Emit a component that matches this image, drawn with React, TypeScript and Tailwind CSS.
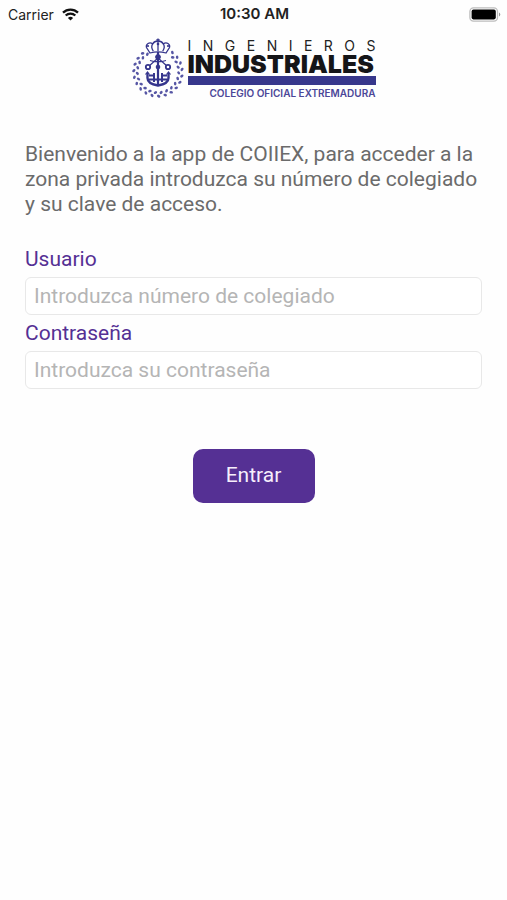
import React from "react";

function WifiIcon() {
  return (
    <svg viewBox="0 0 17 13" className="h-[13px] w-[17px]" fill="none" stroke="#111" strokeWidth="2.3" aria-hidden="true">
      <path d="M1 4.6a10.8 10.8 0 0 1 15 0" />
      <path d="M3.7 7.5a6.9 6.9 0 0 1 9.6 0" />
      <path d="M8.5 12.6 5.9 9.9a3.8 3.8 0 0 1 5.2 0Z" fill="#111" stroke="none" />
    </svg>
  );
}

function BatteryIcon() {
  return (
    <svg viewBox="0 0 32 15" className="h-[15px] w-8" aria-hidden="true">
      <rect x="0.9" y="0.9" width="27.6" height="13.2" rx="3.6" fill="#fff" stroke="#bdbdbd" strokeWidth="1.3" />
      <rect x="2.6" y="2.6" width="24.2" height="9.8" rx="1.8" fill="#000" />
      <path d="M30 5.5a2.2 2.2 0 0 1 0 4Z" fill="#999" />
    </svg>
  );
}

function Crest() {
  const leaves = Array.from({ length: 19 }, (_, i) => 38 + (i * 284) / 18);
  return (
    <svg viewBox="0 0 52 60" className="h-[60px] w-[52px] shrink-0" fill="none" stroke="#35358c" aria-hidden="true">
      <g stroke="none" fill="#5656a4">
        {leaves.map((a) => (
          <g key={a} transform={`rotate(${a} 26 34) translate(26 11)`}>
            <ellipse cx="-1.2" cy="-0.6" rx="1.8" ry="1.3" transform="rotate(35)" />
            <ellipse cx="1" cy="3.4" rx="1.8" ry="1.3" transform="rotate(-30)" />
          </g>
        ))}
      </g>
      <g strokeWidth="1.3">
        <path d="M18 15 14.5 9.5c-1-3.5 3-6 6.2-3.6C22 3.4 24 3 26 3s4 .4 5.3 2.9c3.2-2.4 7.2.1 6.2 3.6L34 15c-5-1.5-11-1.5-16 0Z" />
        <path d="M20.7 5.9c-1.6 2.2-.9 5 .6 7.3M31.3 5.9c1.6 2.2.9 5-.6 7.3M26 .5v12.5M24.3 1.8h3.4" />
      </g>
      <g fill="#35358c" stroke="none">
        <circle cx="16" cy="8" r="1.1" />
        <circle cx="36" cy="8" r="1.1" />
        <circle cx="26" cy="6" r="1.3" />
      </g>
      <path d="M26 14v33" strokeWidth="2.2" />
      <path d="M26 20 16.5 28.5M26 20l9.5 8.5M18 22.500c5 1.500 11 1.500 16 0" strokeWidth="1.2" />
      <circle cx="26" cy="19" r="2.4" fill="#35358c" />
      <circle cx="16" cy="29" r="2.2" fill="#fff" strokeWidth="1.8" />
      <circle cx="36" cy="29" r="2.2" fill="#fff" strokeWidth="1.8" />
      <circle cx="26" cy="29" r="2.3" fill="#35358c" stroke="none" />
      <path d="M15.5 35v5c0 5 4.5 6.5 10.5 7.5 6-1 10.5-2.5 10.5-7.5v-5" strokeWidth="2.4" />
      <path d="M13.5 36.5l2-2.500 2 2.500M34.500 36.500l2-2.500 2 2.500" strokeWidth="1.2" />
      <path d="M17 37.5h5.5M17 41.5h18M30 37.5h5M22 35v9M30 35v9" strokeWidth="2" />
    </svg>
  );
}

function Logo() {
  return (
    <div className="mx-auto flex w-[244px] items-start gap-1">
      <Crest />
      <div className="flex-1 whitespace-nowrap">
        <p className="text-[14px] leading-4 text-[#222] [text-align-last:justify]">I N G E N I E R O S</p>
        <p className="text-[25px] leading-5 font-black text-[#151518]">INDUSTRIALES</p>
        <div className="mt-0.5 h-[9px] bg-[#37378c]" />
        <p className="mt-0.5 text-right text-[10px] leading-3 font-semibold text-[#4b4798]">COLEGIO OFICIAL EXTREMADURA</p>
      </div>
    </div>
  );
}

function Field({ id, label, type, placeholder }: { id: string; label: string; type: string; placeholder: string }) {
  return (
    <div>
      <label htmlFor={id} className="block h-9 text-[21px] leading-9 text-[#553094]">
        {label}
      </label>
      <input
        id={id}
        type={type}
        placeholder={placeholder}
        className="block h-[38px] w-full rounded-md border border-[#e8e8e8] bg-white px-2 text-[21px] text-[#666] outline-none placeholder:text-[#b5b5b5] focus:border-[#553094]"
      />
    </div>
  );
}

export default function App() {
  return (
    <main className="min-h-screen bg-[#fefefe] font-['Inter',sans-serif]">
      <header className="grid h-7 grid-cols-3 items-center pr-1.5 pl-2 text-[14px] text-[#222]">
        <div className="flex items-center gap-2">
          <span>Carrier</span>
          <WifiIcon />
        </div>
        <span className="text-center text-[15px] font-semibold whitespace-nowrap">10:30 AM</span>
        <div className="flex justify-end">
          <BatteryIcon />
        </div>
      </header>
      <div className="mt-[10px]">
        <Logo />
      </div>
      <form className="px-[25px] font-['Roboto',sans-serif]" onSubmit={(e) => e.preventDefault()}>
        <p className="mt-[43px] text-[21px] leading-[25px] text-[#6b6b6b]">
          Bienvenido a la app de COIIEX, para acceder a la zona privada introduzca su número de colegiado y su clave de acceso.
        </p>
        <div className="mt-6">
          <Field id="usuario" label="Usuario" type="text" placeholder="Introduzca número de colegiado" />
          <Field id="clave" label="Contraseña" type="password" placeholder="Introduzca su contraseña" />
        </div>
        <button
          type="submit"
          className="mx-auto mt-[60px] block h-[54px] w-[122px] rounded-[10px] bg-[#553094] text-[21px] text-[#f6eefc]"
        >
          Entrar
        </button>
      </form>
    </main>
  );
}
